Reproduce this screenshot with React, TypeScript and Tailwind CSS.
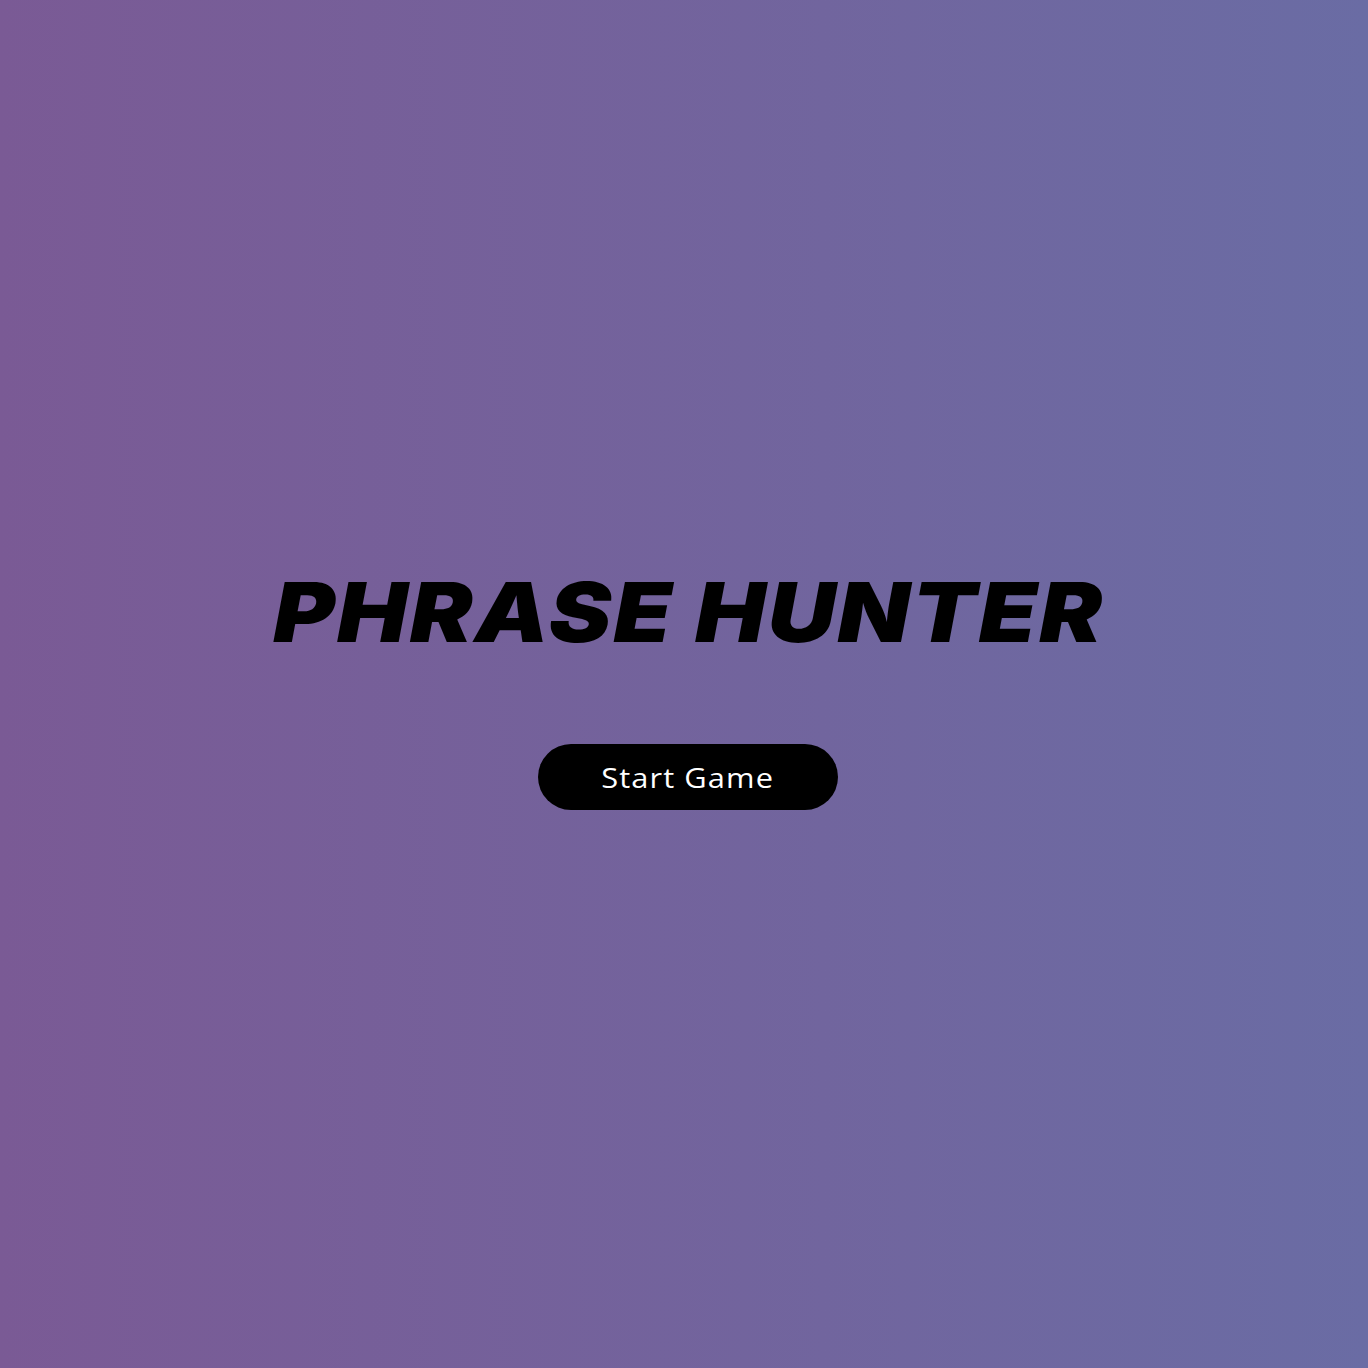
export default function App() {
  return (
    <div className="h-[1368px] w-full bg-gradient-to-r from-[#7a5a95] to-[#6a6ca4] flex flex-col items-center justify-center">
      <div className="flex flex-col items-center pl-[7px] pt-[4px]">
        <h1
          className="text-[83px] leading-[100px] font-black italic text-black tracking-[2px] pl-[2px] scale-x-[1.13]"
          style={{ fontFamily: "Inter, 'Liberation Sans', sans-serif" }}
        >
          PHRASE HUNTER
        </h1>
        <button
          className="mt-[82px] w-[300px] h-[66px] rounded-full bg-black text-white text-[28px]"
          style={{ fontFamily: "'Open Sans', 'Liberation Sans', sans-serif" }}
        >
          <span className="inline-block scale-x-[1.1] tracking-[1px] pl-[1px]">Start Game</span>
        </button>
      </div>
    </div>
  );
}
